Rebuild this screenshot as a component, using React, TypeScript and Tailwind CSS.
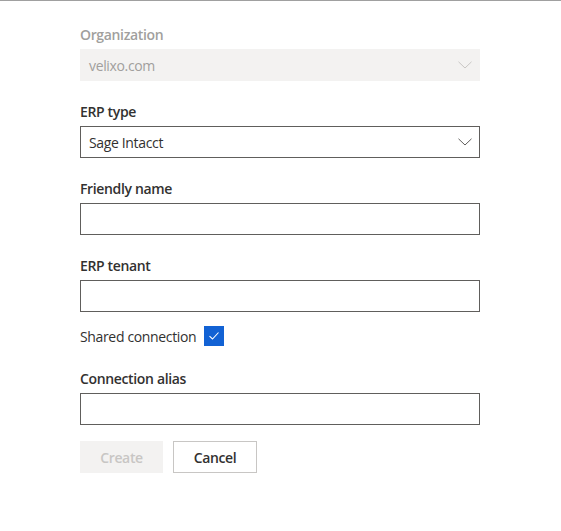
import React from "react";

function Chevron({ color }: { color: string }) {
  return (
    <svg width="14" height="8" viewBox="0 0 14 8" fill="none" className="shrink-0">
      <path d="M0.5 0.8 L7 7 L13.5 0.8" stroke={color} strokeWidth="1" />
    </svg>
  );
}

function Label({ text, disabled }: { text: string; disabled?: boolean }) {
  return (
    <div
      className={`flex h-[29px] items-center text-[14px] font-semibold ${
        disabled ? "text-[#a19f9d]" : "text-[#323130]"
      }`}
    >
      {text}
    </div>
  );
}

function TextField({ label }: { label: string }) {
  return (
    <div className="mb-4">
      <Label text={label} />
      <input className="block h-8 w-full border border-[#605e5c] bg-white px-2 text-[14px] outline-none" />
    </div>
  );
}

export default function App() {
  return (
    <div
      className="min-h-[531px] w-full border-t border-[#a0a0a0] bg-white tracking-[-0.35px]"
      style={{ fontFamily: '"Open Sans", "Noto Sans", sans-serif' }}
    >
      <div className="mx-20 w-[400px] pt-[19px]">
        <div className="mb-4">
          <Label text="Organization" disabled />
          <div className="flex h-8 items-center justify-between bg-[#f3f2f1] pl-[9px] pr-[8px] text-[14px] text-[#a19f9d]">
            <span>velixo.com</span>
            <Chevron color="#c8c6c4" />
          </div>
        </div>

        <div className="mb-4">
          <Label text="ERP type" />
          <div className="flex h-8 items-center justify-between border border-[#605e5c] pl-2 pr-[7px] text-[14px] text-[#323130]">
            <span>Sage Intacct</span>
            <Chevron color="#605e5c" />
          </div>
        </div>

        <TextField label="Friendly name" />
        <TextField label="ERP tenant" />

        <div className="-mt-0.5 mb-[18px] flex h-5 items-center gap-2 text-[14px] text-[#323130]">
          <span>Shared connection</span>
          <span className="flex h-5 w-5 items-center justify-center bg-[#1262d4]">
            <svg width="12" height="10" viewBox="0 0 12 10" fill="none">
              <path d="M1.5 5.2 L4.5 8 L10.5 1.5" stroke="white" strokeWidth="1.1" />
            </svg>
          </span>
        </div>

        <TextField label="Connection alias" />

        <div className="flex gap-[10px]">
          <button
            disabled
            className="h-8 w-[83px] bg-[#f3f2f1] text-[14px] font-semibold text-[#c8c6c4]"
          >
            Create
          </button>
          <button className="h-8 w-[84px] border border-[#c8c6c4] bg-white text-[14px] font-semibold text-[#323130]">
            Cancel
          </button>
        </div>
      </div>
    </div>
  );
}
